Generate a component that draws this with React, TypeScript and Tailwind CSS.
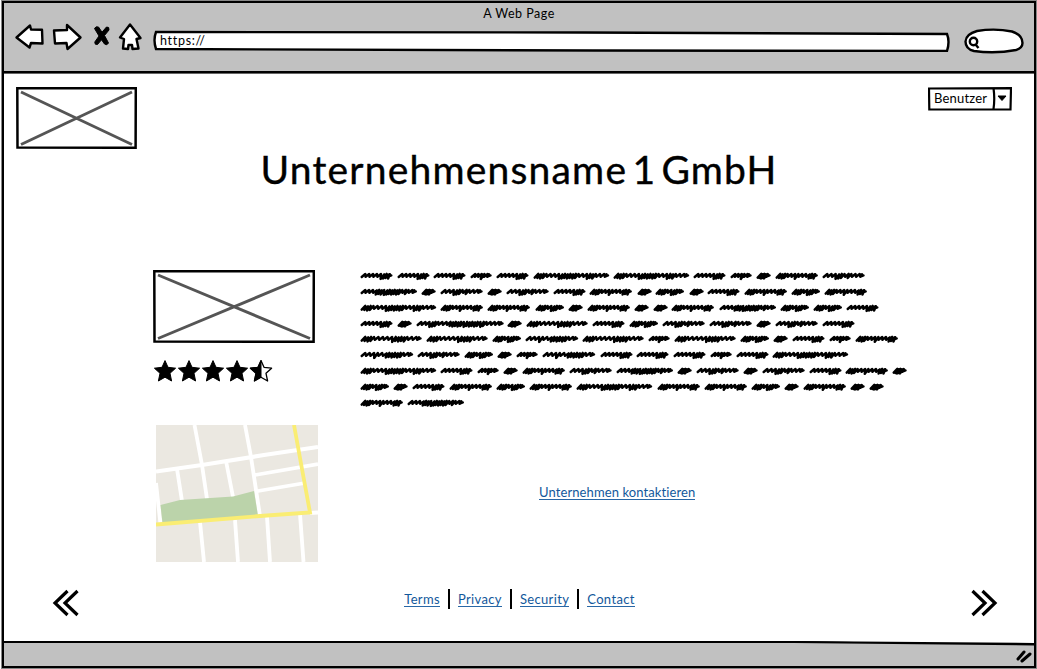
import React from 'react';

const WIDTHS: Record<string, number> = { A: 14, B: 21, C: 28.3, D: 31.8, E: 42.2, e: 42, F: 52.5, f: 56.3, G: 61, H: 75.5, I: 87 };
/* s = open stroke, d = packed stroke, b = low dip */
const STROKES: Record<string, string> = {
  A: 'dddds', B: 'ssbss', C: 'dddsbdds', D: 'ssssbddd', E: 'dddssbsssddd', e: 'ssbddsdsss',
  F: 'ssbssddddddss', f: 'sssdddbddddddsdss', G: 'dddssssbddddsss', H: 'dddsssbddddddssbddsss', I: 'ssbddsssdddddbdddddbdssss',
};
const LINES = ['DDDBDHHDBAEe', 'fAeAeDEACADECE', 'HEECAEAAEfCCD', 'DAIAGDCeeAeD', 'GGCFGBGCADBE', 'FeCABFDDDBDH', 'HDBAEefAeAeDEA', 'CADECEHEECAEAA', 'Ef'];

function scribble(kind: string) {
  const units = STROKES[kind].split('');
  const sizes: Record<string, number> = { s: 3.9, d: 2.5, b: 3.2 };
  const total = units.reduce((n, u) => n + sizes[u], 0);
  const scale = (WIDTHS[kind] - 5.4) / total;
  let x = 1.7;
  let d = units[0] === 'd' ? `M${x} 6.6` : `M${x} 6`;
  units.forEach((u, i) => {
    const w = sizes[u] * scale;
    const top = u === 'd' ? 2.9 + (i % 2) * 0.5 : 3;
    const low = u === 'b' ? 7.9 : u === 'd' ? 7 + (i % 2) * 0.5 : 5.8;
    d += ` L${(x + 3.6).toFixed(1)} ${top} L${(x + w).toFixed(1)} ${low}`;
    x += w;
  });
  return d + ` L${(WIDTHS[kind] - 2).toFixed(1)} 3.2 L${(WIDTHS[kind] - 2.4).toFixed(1)} 5.2 L${(WIDTHS[kind] - 0.5).toFixed(1)} 4.4`;
}

function Scribble({ kind }: { kind: string }) {
  const w = WIDTHS[kind];
  return (
    <svg width={w} height="10" viewBox={`0 0 ${w} 10`} className="shrink-0 overflow-visible" fill="none" stroke="#000" strokeWidth="2.45" strokeLinejoin="round" strokeLinecap="round">
      <path d={scribble(kind)} />
    </svg>
  );
}

function Picture({ w, h, className }: { w: number; h: number; className: string }) {
  return (
    <svg width={w} height={h} viewBox={`0 0 ${w} ${h}`} className={className} fill="none">
      <path d={`M5 5L${w - 5} ${h - 4.5}M5 ${h - 4.5}L${w - 5} 5`} stroke="#555" strokeWidth="2.9" />
      <path d={`M1.300 1.300L${w - 1.2} 1.100L${w - 1.4} ${h - 1.2}L1.500 ${h - 1.5}Z`} stroke="#000" strokeWidth="2.500" />
    </svg>
  );
}

const STAR = 'M11 .6L14 7.300L21.600 8.200L16 13.300L17.600 21L11 17.200L4.400 21L6 13.300L.4 8.200L8 7.300Z';

function Star({ half = false }: { half?: boolean }) {
  return (
    <svg width="24" height="22" viewBox="0 0 24 22" className="overflow-visible" stroke="#000" strokeWidth="1" strokeLinejoin="round">
      {half ? (
        <>
          <path d={STAR} fill="#fff" strokeWidth="1.300" />
          <path d="M11 .6V17.200L4.400 21L6 13.300L.4 8.200L8 7.300Z" />
        </>
      ) : <path d={STAR} />}
    </svg>
  );
}

function StreetMap() {
  return (
    <svg width="162" height="137" viewBox="0 0 162 137" className="mt-[43px] ml-[3px]">
      <path fill="#ebe8e1" d="M0 0H162V137H0Z" />
      <g fill="none" stroke="#fff" strokeWidth="3.800">
        <path d="M0 46.500L46 40L108 30L162 22" strokeWidth="4.200" />
        <path d="M38.500 0L46 40L51 74M89 0L95 32L104 91M21 44L26 76M70 36L77 72M99 50L162 39M102 66L149 58M0 58L4.500 99M44 97L48 137M79 95L82 137M111 92L114 137M144 89L147.500 137M154 88L162 87.500" />
      </g>
      <path fill="#bbd3aa" d="M4.500 80L24 75L77 71.500L98 66L102 91L6.500 98Z" />
      <path d="M138 0L146 44L154 87.500L104 91L0 99.500" fill="none" stroke="#faed73" strokeWidth="3.800" />
    </svg>
  );
}

function Chevrons({ right = false }: { right?: boolean }) {
  return (
    <svg width="28" height="28" viewBox="0 0 28 28" className={right ? 'rotate-180' : ''} fill="none" stroke="#000" strokeWidth="3.200">
      <path d="M15.500 2L3 14L15.500 26M25.500 2L13 14L25.500 26" />
    </svg>
  );
}

const LINK = 'border-b border-[#2867a6] text-[#12589b]';

export default function App() {
  return (
    <div className="h-[669px] w-[1037px] overflow-hidden bg-white pt-px pl-[2px] font-['Lato',sans-serif] text-black">
      <div className="flex h-[667px] w-[1034px] flex-col border-2 border-black bg-white shadow-[0_0_0_1px_#888]">
        <header className="h-[70px] shrink-0 border-b-2 border-black bg-[#c1c1c1] shadow-[0_1px_0_#666]">
          <div className="flex h-[21px] items-center justify-center pt-[1px] text-[12.500px] tracking-[0.5px]">A Web Page</div>
          <div className="flex h-[40px] items-start pl-[10px]">
            <svg width="130" height="32" viewBox="14 21 130 32" className="-mt-[3px] shrink-0" fill="#fff" stroke="#000" strokeWidth="2.400" strokeLinejoin="round">
              <path d="M16.500 37.500L30 25.500L31 29.500L42 29.700L42.500 43.500L31 43L29.500 47.500Z" />
              <path d="M54 30.500L67 30L67 25L80.500 37.500L67.500 49L66.500 43L55 43.500Z" />
              <path d="M120 37.500L130 24.500L140.500 38L136.500 39L138.500 48.500L132.500 49L132 45L128.500 45L128 49L123 48.500L124 39Z" />
              <path d="M94.500 28.500Q95.500 26 98.500 27L102 32.200L106.500 27Q109.500 26.500 109 30L104.500 35.500L108.500 43Q107 46 104.500 44L101.500 39.800L97.500 44.500Q94.500 45 94.800 42L99 36Z" fill="#000" strokeWidth="1" />
            </svg>
            <div className="relative mt-[6px] ml-[9px] flex h-[22px] w-[797px] shrink-0 items-center pt-[1px] pl-[7px] text-[12.500px] tracking-[0.7px]">
              <svg width="797" height="22" viewBox="0 0 797 22" className="absolute inset-0" fill="#fff" stroke="#000" strokeWidth="2.400">
                <path d="M3 2L430 2.500L794 4Q797 11.500 794 21L440 20.500L3 19Q0 10 3 2Z" />
              </svg>
              <span className="relative">https://</span>
            </div>
            <svg width="62" height="28" viewBox="962 27 62 28" className="mt-[3px] ml-[12px] shrink-0" fill="#fff" stroke="#000" strokeWidth="2.400">
              <path d="M965.500 41.500Q966 34 977 31Q995 28 1012 31.500Q1022.500 35 1022.500 43Q1022.500 48 1016 50Q995 54 974 51Q965.500 49 965.500 41.500Z" />
              <circle cx="973.500" cy="41.500" r="3.700" />
              <path d="M975.500 44.500L978.500 48" />
            </svg>
          </div>
        </header>
        <main className="flex grow flex-col">
          <div className="flex h-[75px] items-start justify-between pr-[21px] pl-[12px]">
            <Picture w={121} h={62} className="mt-[14px]" />
            <div className="relative mt-[14px] flex h-[24px] w-[85px] items-center pl-[6px] text-[13px] tracking-[0.2px]">
              <svg width="84" height="24" viewBox="0 0 84 24" className="absolute inset-0" fill="none" stroke="#000" strokeWidth="2.200">
                <path d="M1 1.500L83 1.200L82.500 22.500L1.300 22.500Z M65.500 1Q67 12 65.500 22" />
                <path d="M70 9H78L74 13.500Z" fill="#000" strokeWidth="1" />
              </svg>
              <span className="relative -mt-[1px]">Benutzer</span>
            </div>
          </div>
          <h1 className="-mt-[4px] flex h-[50px] items-center justify-center text-[39px] leading-[50px] tracking-[1.200px] [word-spacing:-6px] [-webkit-text-stroke:0.400px_#000]">Unternehmensname 1 GmbH</h1>
          <div className="mt-[76px] flex h-[293px] shrink-0 items-start pl-[149px]">
            <div className="w-[207px] shrink-0">
              <Picture w={162} h={73} className="" />
              <div className="mt-[17px] flex pl-[0.5px]"><Star /><Star /><Star /><Star /><Star half /></div>
              <StreetMap />
            </div>
            <div className="mt-[1px] flex flex-col">
              {LINES.map((line, i) => (
                <div key={i} className="flex h-[15.850px] gap-[4.900px]">
                  {line.split('').map((k, j) => <Scribble key={j} kind={k} />)}
                </div>
              ))}
              <div className="mt-[71px] ml-[179px] flex"><a className={`${LINK} text-[13px] leading-[14px] tracking-[0.100px]`}>Unternehmen kontaktieren</a></div>
            </div>
          </div>
          <div className="mt-[26px] flex items-start justify-between pr-[36px] pl-[48px]">
            <Chevrons />
            <nav className="flex items-start pr-[11px] text-[13px] leading-[14px] tracking-[0.350px]">
              <a className={`${LINK} mt-[3px]`}>Terms</a><i className="mx-[8px] h-[20px] w-[2px] bg-black" />
              <a className={`${LINK} mt-[3px]`}>Privacy</a><i className="mx-[8px] h-[20px] w-[2px] bg-black" />
              <a className={`${LINK} mt-[3px]`}>Security</a><i className="mx-[8px] h-[20px] w-[2px] bg-black" />
              <a className={`${LINK} mt-[3px]`}>Contact</a>
            </nav>
            <Chevrons right />
          </div>
        </main>
        <footer className="relative flex h-[25px] shrink-0 justify-end border-t-2 border-black bg-[#c1c1c1]">
          <svg width="240" height="5" viewBox="0 0 240 5" className="absolute -top-[2px] right-0">
            <path d="M0 0H240V4L0 0Z" fill="#fff" />
            <path d="M0 0L240 2V4.500L0 2Z" />
          </svg>
          <svg width="20" height="20" viewBox="0 0 20 20" stroke="#000" strokeWidth="3" strokeLinecap="round"><path d="M4 16L10 9M8 18L16 11" /></svg>
        </footer>
      </div>
    </div>
  );
}
